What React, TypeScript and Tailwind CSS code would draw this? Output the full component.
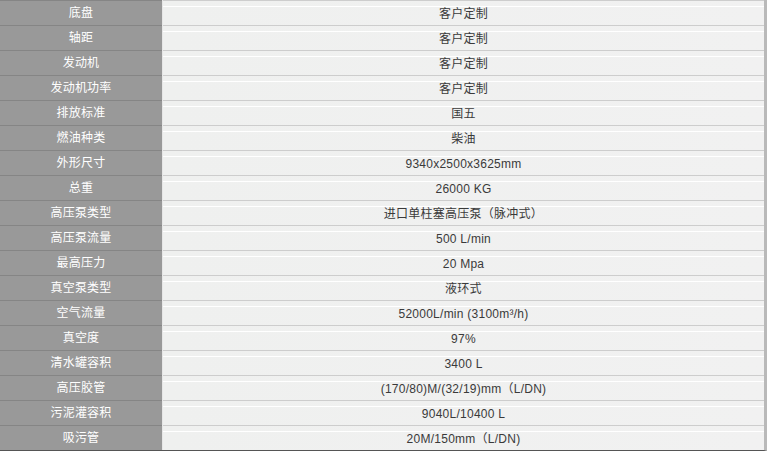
import React from "react";

const rows: [string, string][] = [
  ["底盘", "客户定制"],
  ["轴距", "客户定制"],
  ["发动机", "客户定制"],
  ["发动机功率", "客户定制"],
  ["排放标准", "国五"],
  ["燃油种类", "柴油"],
  ["外形尺寸", "9340x2500x3625mm"],
  ["总重", "26000 KG"],
  ["高压泵类型", "进口单柱塞高压泵（脉冲式）"],
  ["高压泵流量", "500 L/min"],
  ["最高压力", "20 Mpa"],
  ["真空泵类型", "液环式"],
  ["空气流量", "52000L/min (3100m³/h)"],
  ["真空度", "97%"],
  ["清水罐容积", "3400 L"],
  ["高压胶管", "(170/80)M/(32/19)mm（L/DN)"],
  ["污泥灌容积", "9040L/10400 L"],
  ["吸污管", "20M/150mm（L/DN)"],
];

export default function App() {
  return (
    <div
      className="w-[767px] h-[451px] bg-[#f0f0f0] overflow-hidden flex flex-col"
      style={{ fontFamily: '"Liberation Sans", Arial, "Noto Sans CJK SC", sans-serif' }}
    >
      <div className="flex flex-col border-b border-b-[#555555] border-r-[3px] border-r-[#b9b9b9] w-[767px]">
        {rows.map(([k, v], i) => (
          <div key={i} className="flex h-[25px]">
            <div className="w-[162px] shrink-0 bg-[#999999] border-t border-t-[#858585] flex items-center justify-center text-white text-[12px] leading-none tracking-[0.2px]">
              {k}
            </div>
            <div className="w-px bg-[#e6e6e6] shrink-0" />
            <div className="flex-1 bg-gradient-to-r from-[#eff0ef] to-[#f1f1f1] border-t border-t-[#cdcdcd] flex items-center justify-center text-[#3a3a3a] text-[12px] leading-none tracking-[0.25px]">
              <span className="block border-t border-white w-full text-center pt-[1px] -mt-[1px]">{v}</span>
            </div>
          </div>
        ))}
      </div>
    </div>
  );
}
